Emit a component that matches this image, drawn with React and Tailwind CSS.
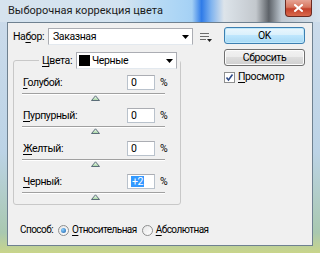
import React from "react";

function Arrow() {
  return (
    <svg width="7" height="4" viewBox="0 0 7 4" className="shrink-0">
      <polygon points="0,0 7,0 3.5,4" fill="#000" />
    </svg>
  );
}

function Thumb() {
  return (
    <svg width="9" height="6" viewBox="0 0 9 6" className="block">
      <defs>
        <linearGradient id="tg" x1="0" y1="0" x2="0" y2="1">
          <stop offset="0" stopColor="#ffffff" />
          <stop offset="1" stopColor="#9fd49b" />
        </linearGradient>
      </defs>
      <polygon points="0.5,5.5 4.5,0.8 8.5,5.5" fill="url(#tg)" stroke="#5b6d78" strokeWidth="1" strokeLinejoin="round" />
    </svg>
  );
}

function U({ c }) {
  return <span className="underline underline-offset-2">{c}</span>;
}

function Row({ first, rest, value, selected }) {
  return (
    <div className="flex flex-col">
      <div className="flex items-center h-[15px]">
        <span className="w-[104px] whitespace-nowrap">
          <U c={first} />
          {rest}
        </span>
        <div className="w-[28px] h-[15px] bg-white border border-[#b9c2cc] border-t-[#abadb3] flex items-center pl-[3px]">
          {selected ? (
            <span className="bg-[#3399ff] text-white leading-[11px] px-[1px]">{value}</span>
          ) : (
            <span>{value}</span>
          )}
        </div>
        <span className="ml-[5px]">%</span>
      </div>
      <div className="mt-[3px] -ml-[1px] w-[143px] h-[2px] border-t border-[#a0a0a0] border-b border-b-white" />
      <div className="pl-[68px] h-[6px]">
        <Thumb />
      </div>
    </div>
  );
}

function Radio({ checked }) {
  return (
    <span className="w-[11px] h-[11px] rounded-full border border-[#8e8f8f] bg-gradient-to-br from-[#e6e6e6] to-[#ffffff] flex items-center justify-center shrink-0">
      {checked && <span className="w-[5px] h-[5px] rounded-full bg-[radial-gradient(circle_at_35%_35%,#8ad0ff,#1a5ea8)]" />}
    </span>
  );
}

export default function App() {
  return (
    <div className="relative w-[320px] h-[253px] overflow-hidden bg-[linear-gradient(180deg,#cddceb_0%,#bcd3e6_60%,#a9c8b0_92%,#c9d58a_100%)] font-['Roboto',sans-serif] text-[10.5px] tracking-[-0.4px] leading-[14px] text-black flex flex-col">
      {/* title bar */}
      <div className="relative h-[22px] shrink-0 flex items-center pl-[8px] text-[11px] tracking-normal bg-[linear-gradient(90deg,#d6e3ee_0%,#d3e3f0_38%,#b6daf5_50%,#a8d3f5_58%,#a4d0f4_60%,#2f7be8_63%,#7fb3ef_66%,#dde4ea_70%,#cdd3d9_76%,#c3c8cd_80%,#5d6268_84%,#bfc8d1_88%,#d5e2ee_100%)]">
        <span className="text-[#1b1b1b]">Выборочная коррекция цвета</span>
        <div className="absolute right-[8px] top-0 w-[27px] h-[17px] rounded-b-[4px] border border-t-0 border-[#6b2a22] bg-[linear-gradient(180deg,#e6a394_0%,#d7765f_45%,#c3402b_55%,#d9694c_100%)] flex items-center justify-center">
          <svg width="9" height="8" viewBox="0 0 9 8">
            <path d="M1 1 L8 7 M8 1 L1 7" stroke="#fff" strokeWidth="2" strokeLinecap="square" />
          </svg>
        </div>
      </div>

      {/* client area */}
      <div className="mx-[7px] h-[224px] border border-[#6f8190] bg-[#f0f0f0] flex">
        {/* left column */}
        <div className="w-[216px] pl-[5px] pt-[5px] flex flex-col">
          <div className="flex items-center h-[17px]">
            <span className="w-[35px] whitespace-nowrap">
              На<U c="б" />ор:
            </span>
            <div className="w-[145px] h-[17px] bg-white border border-[#abadb3] border-b-[#e3e9ef] flex items-center pl-[4px] pr-[3px]">
              <span className="flex-1">Заказная</span>
              <Arrow />
            </div>
            <svg width="12" height="10" viewBox="0 0 12 10" className="ml-[7px]">
              <path d="M0 1.5 H9 M0 4.5 H9 M0 7.5 H6" stroke="#6b6b6b" strokeWidth="1" />
              <polygon points="7,7 12,7 9.5,10" fill="#222" />
            </svg>
          </div>

          <fieldset className="mt-[7px] w-[162px] border border-[#c8c8c8] rounded-[3px] pl-[9px] pb-[4px] pt-[6px]">
            <legend className="ml-[16px] px-[3px] flex items-center">
              <span className="whitespace-nowrap">
                <U c="Ц" />вета:
              </span>
              <div className="ml-[4px] w-[101px] h-[17px] bg-white border border-[#abadb3] border-b-[#e3e9ef] flex items-center pl-[2px] pr-[3px]">
                <span className="w-[11px] h-[11px] bg-black mr-[2px]" />
                <span className="flex-1">Черные</span>
                <Arrow />
              </div>
            </legend>
            <div className="flex flex-col gap-[7px]">
              <Row first="Г" rest="олубой:" value="0" />
              <Row first="П" rest="урпурный:" value="0" />
              <Row first="Ж" rest="елтый:" value="0" />
              <Row first="Ч" rest="ерный:" value="+2" selected />
            </div>
          </fieldset>

          <div className="mt-[18px] flex items-center pl-[7px] whitespace-nowrap text-[10px] tracking-[-0.55px]">
            <span>Способ:</span>
            <span className="ml-[5px]"><Radio checked /></span>
            <span className="ml-[3px]">
              <U c="О" />тносительная
            </span>
            <span className="ml-[5px]"><Radio /></span>
            <span className="ml-[3px]">
              <U c="А" />бсолютная
            </span>
          </div>
        </div>

        {/* right column */}
        <div className="pt-[4px] flex flex-col">
          <div className="w-[81px] h-[17px] rounded-[3px] border border-[#3c7fb1] bg-[linear-gradient(180deg,#eaf6fd_0%,#d9f0fc_49%,#bee6fd_50%,#a7d9f5_100%)] shadow-[inset_0_0_0_1px_#bfe8fb] flex items-center justify-center">
            OK
          </div>
          <div className="mt-[5px] w-[81px] h-[17px] rounded-[3px] border border-[#707070] bg-[linear-gradient(180deg,#f2f2f2_0%,#ebebeb_49%,#dddddd_50%,#cfcfcf_100%)] shadow-[inset_0_0_0_1px_#fcfcfc] flex items-center justify-center">
            Сбросить
          </div>
          <div className="mt-[4px] flex items-center">
            <span className="w-[11px] h-[11px] border border-[#8e8f8f] bg-white flex items-center justify-center">
              <svg width="9" height="9" viewBox="0 0 9 9">
                <path d="M1.5 4.5 L3.5 7 L7.5 1.5" stroke="#2d4a88" strokeWidth="1.6" fill="none" />
              </svg>
            </span>
            <span className="ml-[3px]">
              <U c="П" />росмотр
            </span>
          </div>
        </div>
      </div>
    </div>
  );
}
